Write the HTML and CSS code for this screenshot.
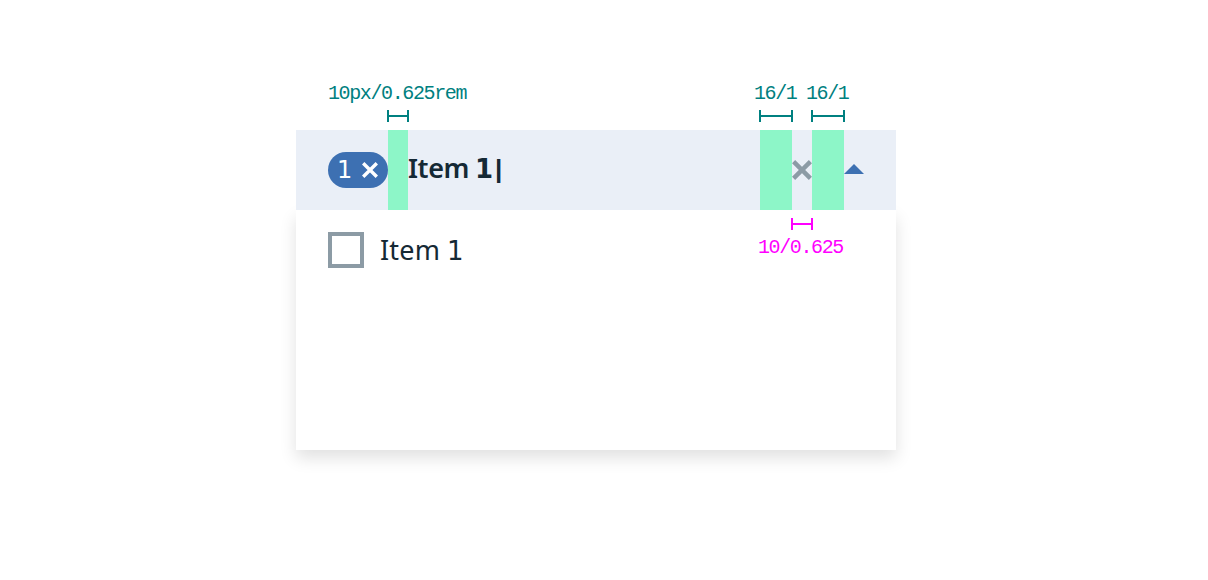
FILE: index.html
```html
<!DOCTYPE html>
<html lang="en">
<head>
<meta charset="utf-8">
<title>Multi-select spacing</title>
<link rel="stylesheet" href="styles.css">
</head>
<body>
<main class="spec">
  <div class="labels">
    <span class="note note-wide">10px/0.625rem</span>
    <span class="note note-gap">16/1</span>
    <span class="note">16/1</span>
  </div>
  <div class="brackets">
    <i class="bracket bracket-small"></i>
    <i class="bracket bracket-first"></i>
    <i class="bracket bracket-second"></i>
  </div>
  <div class="field">
    <span class="tag"><span class="tag-count">1</span><svg class="tag-close" viewBox="0 0 16 16"><path d="M1.2 1.2 14.8 14.8M14.8 1.2 1.2 14.8"/></svg></span>
    <i class="spacer spacer-small"></i>
    <span class="query"><span class="word">Item</span><span class="digit">1</span><span class="caret">|</span></span>
    <i class="spacer spacer-push"></i>
    <svg class="clear" viewBox="0 0 20 20"><path d="M1.6 1.6 18.4 18.4M18.4 1.6 1.6 18.4"/></svg>
    <i class="spacer"></i>
    <svg class="arrow" viewBox="0 0 20 10"><path d="M0 10 10 0 20 10z"/></svg>
  </div>
  <div class="menu">
    <div class="option"><i class="checkbox"></i><span class="option-text"><span class="word">Item</span><span class="digit">1</span></span></div>
    <div class="clear-size"><i class="bracket bracket-pink"></i><span class="note note-pink">10/0.625</span></div>
  </div>
</main>
</body>
</html>
```
FILE: styles.css
```css
body { margin: 0; min-height: 580px; background: #fff; }
.spec { box-sizing: border-box; width: 600px; height: 580px; margin-left: 296px; padding-top: 81px; color: #152935; }
.labels { display: flex; box-sizing: border-box; height: 29px; padding-left: 32px; }
.note { font: 20px/26px "Liberation Mono", monospace; letter-spacing: -1.38px; color: #008080; white-space: nowrap; }
.note-wide { width: 426px; }
.note-gap { width: 52px; }
.brackets { display: flex; height: 20px; }
.bracket { box-sizing: border-box; flex: none; width: 34px; height: 12px; border: solid #008080; border-width: 0 2px; background: linear-gradient(#008080, #008080) 0 5px / 100% 2px no-repeat; }
.bracket-small { width: 22px; margin-left: 91px; }
.bracket-first { margin-left: 350px; }
.bracket-second { margin-left: 18px; }
.field { display: flex; align-items: center; box-sizing: border-box; height: 80px; padding: 0 32px; background: #eaeff7; position: relative; z-index: 1; }
.tag { display: flex; align-items: center; box-sizing: border-box; width: 60px; height: 36px; padding: 0 10px 0 9px; border-radius: 18px; background: #3d70b2; color: #fff; }
.tag-count { font: 24px/36px "DejaVu Sans", sans-serif; }
.tag-close { width: 16px; height: 16px; margin-left: auto; fill: none; stroke: #fff; stroke-width: 3.4; }
.spacer { width: 32px; height: 80px; background: #8df6c8; }
.spacer-small { width: 20px; }
.spacer-push { margin-left: auto; }
.query, .option-text { display: flex; align-items: baseline; font: 27px/36px "Noto Sans", sans-serif; }
.query { font-weight: 600; margin-top: -3px; }
.word { width: 66px; letter-spacing: 0.2px; white-space: nowrap; }
.query .word { width: 67px; letter-spacing: -0.4px; }
.digit { width: 18px; font: 26px/36px "DejaVu Sans", sans-serif; }
.option-text .digit { margin-left: 1px; }
.query .digit { font-weight: 700; }
.caret { margin-left: 2px; font: 700 26px/36px "Liberation Sans", sans-serif; }
.clear { width: 20px; height: 20px; fill: none; stroke: #8c9ba5; stroke-width: 4.4; }
.arrow { width: 20px; height: 10px; margin-top: -2px; fill: #3d70b2; }
.menu { display: flex; justify-content: space-between; box-sizing: border-box; height: 240px; padding: 8px 52px 0 32px; background: #fff; box-shadow: 0 8px 16px rgba(0, 0, 0, 0.12); }
.option { display: flex; align-items: center; gap: 16px; height: 64px; }
.checkbox { box-sizing: border-box; width: 36px; height: 36px; border: 4px solid #8c9ba5; }
.clear-size { display: flex; flex-direction: column; width: 86px; }
.bracket-pink { width: 22px; margin-left: 33px; border-color: #f0f; background-image: linear-gradient(#f0f, #f0f); }
.note-pink { margin-top: 5px; color: #f0f; }
```
